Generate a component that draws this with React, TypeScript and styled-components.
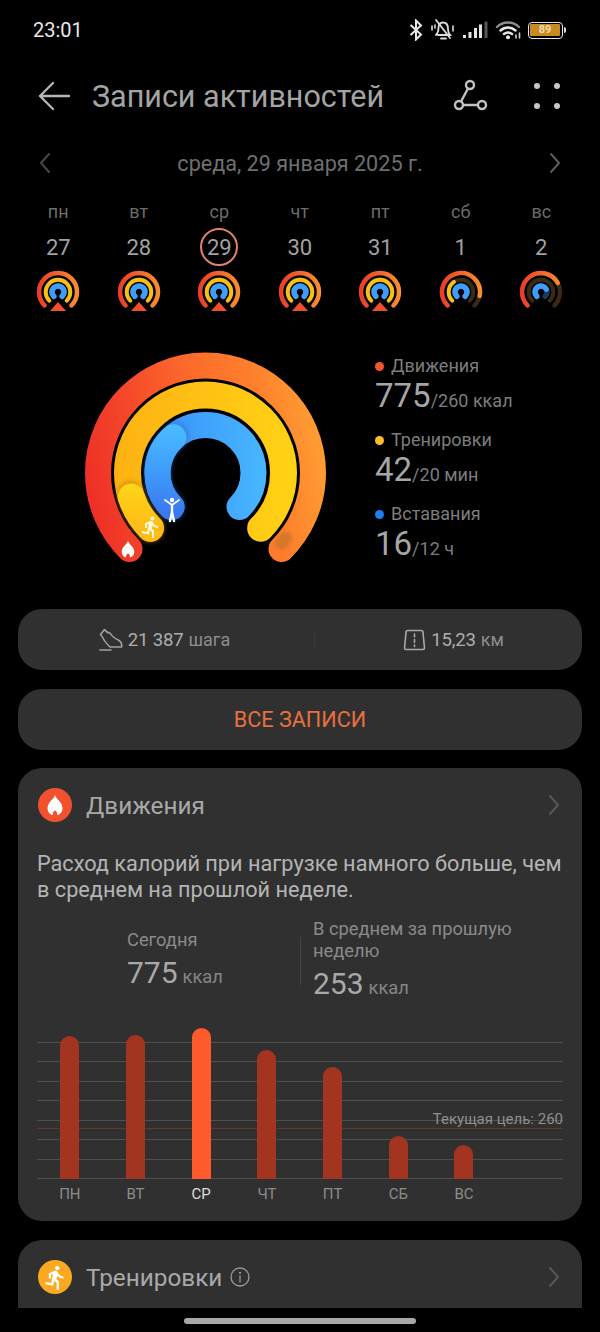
import React, { useId } from "react";
import styled, { createGlobalStyle } from "styled-components";
import { MdDirectionsRun } from "react-icons/md";

const Global = createGlobalStyle`
  html, body { margin: 0; padding: 0; background: #000; }
  body { width: 600px; height: 1332px; overflow: hidden; font-family: Roboto, "Noto Sans", sans-serif; }
  * { box-sizing: border-box; }
`;

const Page = styled.div`
  width: 600px;
  height: 1332px;
  background: #000;
  overflow: hidden;
  display: flex;
  flex-direction: column;
`;

const StatusBar = styled.div`
  height: 60px;
  display: flex;
  align-items: center;
  justify-content: space-between;
  padding: 0 34px 0 33px;
`;
const Clock = styled.span`
  font-size: 20px;
  font-weight: 400;
  color: #e8e8e8;
`;
const StatusIcons = styled.div`
  display: flex;
  align-items: center;
  gap: 7px;
`;
const BatteryBody = styled.div`
  width: 35px;
  height: 17px;
  border: 1.5px solid #e6e6e6;
  border-radius: 4px;
  padding: 1.5px;
  display: flex;
`;
const BatteryFill = styled.div`
  flex: 1;
  background: #c98a22;
  border-radius: 1px;
  color: #eedcb4;
  font-size: 11px;
  font-weight: 700;
  line-height: 11px;
  text-align: center;
`;
const BatteryTip = styled.div`
  width: 2.5px;
  height: 6px;
  background: #ddd;
  border-radius: 0 2px 2px 0;
  margin-left: -6px;
`;

const Header = styled.div`
  height: 72px;
  display: flex;
  align-items: center;
  padding-left: 38px;
`;
const Title = styled.h1`
  margin: 0 0 0 22px;
  font-size: 30.5px;
  font-weight: 400;
  color: #a4a4a4;
  flex: 1;
  white-space: nowrap;
`;
const HeaderActions = styled.div`
  display: flex;
  align-items: center;
  gap: 45px;
  padding-right: 40px;
`;

const DateRow = styled.div`
  margin-top: 7px;
  height: 48px;
  display: flex;
  align-items: center;
  justify-content: space-between;
  padding: 0 38px;
`;
const DateText = styled.span`
  font-size: 21.6px;
  color: #6f6f6f;
`;

const Week = styled.div`
  margin-top: 13px;
  padding: 0 18px;
  display: grid;
  grid-template-columns: repeat(7, 80.5px);
`;
const DayColumn = styled.div`
  display: flex;
  flex-direction: column;
  align-items: center;
`;
const DayName = styled.span`
  height: 24px;
  line-height: 24px;
  font-size: 18px;
  color: #6c6c6c;
`;
const DayNumber = styled.span<{ $selected?: boolean }>`
  margin-top: 4px;
  width: 38px;
  height: 38px;
  line-height: ${(p) => (p.$selected ? "36px" : "40px")};
  text-align: center;
  font-size: 22px;
  color: #a2a2a2;
  border-radius: 50%;
  border: ${(p) => (p.$selected ? "2px solid #e0836a" : "none")};
`;
const MiniSvg = styled.svg`
  display: block;
  margin-top: 3px;
`;

const Summary = styled.div`
  margin-top: 25px;
  height: 269px;
  display: flex;
  padding-left: 70px;
`;
const BigSvg = styled.svg`
  display: block;
  flex: none;
`;
const Legend = styled.div`
  margin: 14px 0 0 35px;
  display: flex;
  flex-direction: column;
`;
const LegendItem = styled.div`
  height: 74px;
`;
const LegendLabel = styled.div`
  height: 24px;
  line-height: 24px;
  font-size: 18px;
  color: #7d7d7d;
  display: flex;
  align-items: center;
  gap: 7px;
`;
const Dot = styled.span<{ $color: string }>`
  width: 9px;
  height: 9px;
  border-radius: 50%;
  background: ${(p) => p.$color};
`;
const LegendValue = styled.div`
  height: 36px;
  line-height: 36px;
  font-size: 33px;
  color: #a6a6a6;
  white-space: nowrap;
`;
const LegendGoal = styled.span`
  font-size: 18px;
  color: #7d7d7d;
`;

const Panel = styled.div`
  margin: 0 18px;
  background: #303030;
  border-radius: 24px;
`;
const StatsPanel = styled(Panel)`
  height: 61px;
  display: grid;
  grid-template-columns: 296px 1px 1fr;
  align-items: center;
`;
const Stat = styled.div<{ $shift?: number; $pull?: number }>`
  display: flex;
  align-items: center;
  justify-content: center;
  gap: 5px;
  font-size: 18.6px;
  color: #adadad;
  padding-left: ${(p) => p.$shift || 0}px;
  padding-right: ${(p) => p.$pull || 0}px;
`;
const StatValue = styled.span`
  letter-spacing: -0.2px;
`;
const StatUnit = styled.span`
  color: #8d8d8d;
  font-size: 18px;
`;
const StatDivider = styled.div`
  height: 18px;
  background: #3a3a3a;
`;
const AllButton = styled(Panel)`
  margin-top: 19px;
  height: 61px;
  line-height: 61px;
  text-align: center;
  font-size: 21.6px;
  color: #e8703f;
`;
const ActivityCard = styled(Panel)`
  margin-top: 18px;
  padding: 0 19px 17px;
`;
const CardHeader = styled.div`
  height: 74px;
  display: flex;
  align-items: center;
  gap: 14px;
  padding: 0 2px 0 1px;
`;
const CardIcon = styled.div<{ $color: string }>`
  width: 34px;
  height: 34px;
  border-radius: 50%;
  flex: none;
  background: ${(p) => p.$color};
  display: flex;
  align-items: center;
  justify-content: center;
  color: #fff;
`;
const CardTitle = styled.span`
  font-size: 24.3px;
  color: #a9a9a9;
`;
const TitleGroup = styled.div`
  flex: 1;
  display: flex;
  align-items: center;
  gap: 8px;
`;
const Body = styled.p`
  margin: 9px 0 0;
  font-size: 21.7px;
  line-height: 26px;
  color: #b4b4b4;
  white-space: nowrap;
`;
const Compare = styled.div`
  margin-top: 15px;
  padding-left: 90px;
  display: flex;
`;
const CompareToday = styled.div`
  width: 173px;
  padding-top: 11px;
`;
const CompareWeek = styled.div`
  position: relative;
  padding-left: 13px;
  &::before {
    content: "";
    position: absolute;
    left: 0;
    top: 19px;
    width: 1px;
    height: 48px;
    background: #454545;
  }
`;
const CompareLabel = styled.div`
  font-size: 18.3px;
  line-height: 22px;
  color: #8a8a8a;
`;
const CompareValue = styled.div`
  margin-top: 2px;
  line-height: 40px;
  font-size: 30px;
  color: #a9a9a9;
`;
const CompareUnit = styled.span`
  margin-left: 5px;
  font-size: 18.3px;
  color: #868686;
`;

const Chart = styled.div`
  position: relative;
  margin-top: 20px;
  height: 151px;
`;
const GridLines = styled.div`
  position: absolute;
  inset: 14px 0 0 0;
  display: flex;
  flex-direction: column;
  justify-content: space-between;
`;
const GridLine = styled.div`
  height: 1px;
  background: #4f4f4f;
`;
const GoalLine = styled.div`
  position: absolute;
  left: 0;
  right: 0;
  top: 100px;
  height: 1px;
  background: #63392e;
`;
const GoalLabel = styled.span`
  position: absolute;
  right: 0;
  top: 82px;
  font-size: 15px;
  line-height: 18px;
  color: #8f8f8f;
`;
const Columns = styled.div`
  display: grid;
  grid-template-columns: repeat(7, 65.7px);
`;
const BarSlot = styled(Columns)`
  position: relative;
  height: 151px;
  align-items: end;
  justify-items: center;
`;
const Bar = styled.div<{ $h: number; $active?: boolean }>`
  width: 19px;
  height: ${(p) => p.$h}px;
  border-radius: 10px 10px 0 0;
  background: ${(p) => (p.$active ? "#ff5a2b" : "#a3341f")};
`;
const ChartLabel = styled.span<{ $active?: boolean }>`
  margin-top: 5px;
  text-align: center;
  font-size: 15px;
  line-height: 20px;
  color: ${(p) => (p.$active ? "#dedede" : "#8c8c8c")};
`;

const CutCard = styled(Panel)`
  margin-top: 19px;
  height: 68px;
  padding: 0 19px;
  border-radius: 24px 24px 0 0;
  overflow: hidden;
  flex: none;
`;
const HomeBar = styled.div`
  margin: 10px auto 0;
  width: 232px;
  height: 6px;
  border-radius: 3px;
  background: #a8a8a8;
  flex: none;
`;

const FLAME = "M12 2C13 6.2 19.5 9 19.5 15.2C19.5 19.8 16 22 14.2 22C14.6 20 13.6 18 12 17.4C10.4 18 9.4 20 9.8 22C8 22 4.5 19.8 4.5 15.2C4.5 9 11 6.2 12 2Z";

const Flame = ({ x, y, s, fill = "#fff" }: { x: number; y: number; s: number; fill?: string }) => (
  <svg x={x} y={y} width={s} height={s} viewBox="0 0 24 24">
    <path d={FLAME} fill={fill} />
  </svg>
);

function pt(cx: number, cy: number, r: number, a: number) {
  const t = ((a - 90) * Math.PI) / 180;
  return [cx + r * Math.cos(t), cy + r * Math.sin(t)];
}
function arc(cx: number, cy: number, r: number, a0: number, a1: number) {
  const [x0, y0] = pt(cx, cy, r, a0);
  const [x1, y1] = pt(cx, cy, r, a1);
  const large = a1 - a0 > 180 ? 1 : 0;
  return `M${x0.toFixed(2)} ${y0.toFixed(2)}A${r} ${r} 0 ${large} 1 ${x1.toFixed(2)} ${y1.toFixed(2)}`;
}

type MiniProps = { move: number; train: number; stand: number; peak?: boolean };

const MiniRing = ({ move, train, stand, peak = true }: MiniProps) => {
  const id = useId();
  const c = 23;
  return (
    <MiniSvg width={46} height={46} viewBox="0 0 46 46">
      <defs>
        <linearGradient id={id} x1="2" y1="0" x2="44" y2="0" gradientUnits="userSpaceOnUse">
          <stop offset="0" stopColor="#ea3a28" />
          <stop offset="0.55" stopColor="#f7682c" />
          <stop offset="1" stopColor="#fb9030" />
        </linearGradient>
      </defs>
      <g fill="none" strokeLinecap="round">
        <path d={arc(c, c, 19, -135, 135)} stroke="#3a2a14" strokeWidth={4.4} />
        <path d={arc(c, c, 12.3, -135, 135)} stroke="#3a2c14" strokeWidth={3.9} />
        <path d={arc(c, c, 6, -135, 135)} stroke="#1c3a5c" strokeWidth={5.5} />
        <path d={arc(c, c, 19, -135, move)} stroke={`url(#${id})`} strokeWidth={4.4} />
        {train > -135 && <path d={arc(c, c, 12.3, -135, train)} stroke="#fdbd17" strokeWidth={3.9} />}
        <path d={arc(c, c, 6, -135, stand)} stroke="#3f9dfb" strokeWidth={5.5} />
      </g>
      {peak && <polygon points="23,33 15,42 31,42" fill="#f0502a" />}
    </MiniSvg>
  );
};

const BigRing = () => {
  const cx = 135.5;
  const cy = 133;
  const ro = 107.5;
  const rm = 78;
  const ri = 48;
  return (
    <BigSvg width={270} height={235} viewBox="0 0 270 235">
      <defs>
        <linearGradient id="bo" x1="15" y1="200" x2="256" y2="150" gradientUnits="userSpaceOnUse">
          <stop offset="0" stopColor="#ec2a26" />
          <stop offset="0.3" stopColor="#f64a2a" />
          <stop offset="0.55" stopColor="#fc6a2b" />
          <stop offset="0.8" stopColor="#fe7f2c" />
          <stop offset="1" stopColor="#ff9a32" />
        </linearGradient>
        <linearGradient id="bm" x1="45" y1="0" x2="227" y2="0" gradientUnits="userSpaceOnUse">
          <stop offset="0" stopColor="#fdb212" />
          <stop offset="0.5" stopColor="#ffc113" />
          <stop offset="1" stopColor="#ffd315" />
        </linearGradient>
        <linearGradient id="bmo" x1="0" y1="190" x2="0" y2="145" gradientUnits="userSpaceOnUse">
          <stop offset="0" stopColor="#fdbc17" />
          <stop offset="1" stopColor="#ffd418" />
        </linearGradient>
        <linearGradient id="bi" x1="75" y1="0" x2="197" y2="0" gradientUnits="userSpaceOnUse">
          <stop offset="0" stopColor="#3b8ef8" />
          <stop offset="0.5" stopColor="#40a2fd" />
          <stop offset="1" stopColor="#47b7ff" />
        </linearGradient>
        <linearGradient id="bio" x1="0" y1="178" x2="0" y2="90" gradientUnits="userSpaceOnUse">
          <stop offset="0" stopColor="#3a74ee" />
          <stop offset="0.55" stopColor="#3f9dfb" />
          <stop offset="1" stopColor="#4ab9ff" />
        </linearGradient>
        <filter id="soft" filterUnits="userSpaceOnUse" x="0" y="0" width="270" height="235">
          <feGaussianBlur stdDeviation="2.5" />
        </filter>
        <filter id="softer" filterUnits="userSpaceOnUse" x="0" y="0" width="270" height="235">
          <feGaussianBlur stdDeviation="1.5" />
        </filter>
      </defs>
      <g fill="none" strokeLinecap="round">
        <path d={arc(cx, cy, ro, -135, 135)} stroke="url(#bo)" strokeWidth={26} />
        <path d={arc(cx, cy, ro - 4, 129, 133)} stroke="#c9742a" strokeWidth={13} filter="url(#softer)" opacity={0.7} />

        <path d={arc(cx, cy, rm, -135, 135)} stroke="url(#bm)" strokeWidth={27} />
        <path d={arc(cx, cy, rm, -135, -106)} stroke="#c98608" strokeWidth={27} filter="url(#soft)" opacity={0.7} />
        <path d={arc(cx, cy, rm, -135, -108)} stroke="url(#bmo)" strokeWidth={27} />

        <path d={arc(cx, cy, ri, -135, 135)} stroke="url(#bi)" strokeWidth={26} />
        <path d={arc(cx, cy, ri, -135, -38)} stroke="#2f6fd0" strokeWidth={26} filter="url(#soft)" opacity={0.55} />
        <path d={arc(cx, cy, ri, -135, -42)} stroke="url(#bio)" strokeWidth={26} />
      </g>
      <Flame x={48} y={199} s={20} />
      <svg x={69} y={175} width={24} height={24} viewBox="0 0 24 24">
        <MdDirectionsRun x={0} y={0} size={24} color="#fff8dc" />
      </svg>
      <g fill="none" stroke="#fff" strokeWidth={1.8} strokeLinecap="round" strokeLinejoin="round">
        <path d="M95 160L102 165L109 160" />
        <path d="M102 165L102 172M102 172L100 181M102 172L104 181" strokeWidth={2.4} />
      </g>
      <circle cx={102} cy={160} r={2.2} fill="#fff" />
    </BigSvg>
  );
};

const days: { n: string; d: string; ring: MiniProps; sel?: boolean }[] = [
  { n: "пн", d: "27", ring: { move: 135, train: 135, stand: 135 } },
  { n: "вт", d: "28", ring: { move: 135, train: 135, stand: 135 } },
  { n: "ср", d: "29", ring: { move: 135, train: 135, stand: 135 }, sel: true },
  { n: "чт", d: "30", ring: { move: 135, train: 135, stand: 135 } },
  { n: "пт", d: "31", ring: { move: 135, train: 135, stand: 135 } },
  { n: "сб", d: "1", ring: { move: 102, train: -35, stand: 135, peak: false } },
  { n: "вс", d: "2", ring: { move: 62, train: -135, stand: 60, peak: false } },
];

const bars = [
  { l: "ПН", h: 143 },
  { l: "ВТ", h: 144 },
  { l: "СР", h: 151, a: true },
  { l: "ЧТ", h: 129 },
  { l: "ПТ", h: 112 },
  { l: "СБ", h: 43 },
  { l: "ВС", h: 34 },
];

const Chevron = ({ left, color }: { left?: boolean; color: string }) => (
  <svg width={14} height={24} viewBox="0 0 14 24" fill="none" stroke={color} strokeWidth={2} strokeLinecap="round" strokeLinejoin="round">
    <path d={left ? "M11 3L3 12L11 21" : "M3 3L11 12L3 21"} />
  </svg>
);

export default function App() {
  return (
    <Page>
      <Global />
      <StatusBar>
        <Clock>23:01</Clock>
        <StatusIcons>
          <svg width={14} height={22} viewBox="0 0 14 22" fill="none" stroke="#e8e8e8" strokeWidth={2} strokeLinejoin="miter">
            <path d="M1.5 6L12 15.5L7 20.5V1.5L12 6.5L1.5 16" />
          </svg>
          <svg width={26} height={24} viewBox="0 0 26 24" fill="none" stroke="#dcdcdc" strokeWidth={1.8} strokeLinecap="round">
            <path d="M8 17H20C18 15 18 13 18 11C18 7 16 4.5 13 4.5C10 4.5 8.5 7 8.5 10C8.5 13 8 15 6 17" />
            <path d="M11 20.5H16" />
            <path d="M6 2L20 20" />
            <path d="M2 8V12M5 7V10M23 8V13" strokeWidth={1.6} />
          </svg>
          <svg width={25} height={18} viewBox="0 0 25 18" fill="#e4e4e4">
            <rect x="0" y="14" width="3" height="3" />
            <rect x="5.5" y="11" width="3" height="6" />
            <rect x="11" y="7" width="3" height="10" />
            <rect x="16" y="3.5" width="3" height="13.5" />
            <rect x="21.5" y="0.5" width="3" height="16.5" fill="#555" />
          </svg>
          <svg width={26} height={20} viewBox="0 0 26 20" fill="none" strokeLinecap="round">
            <path d="M2 7C8 1 18 1 24 7" stroke="#8e8e8e" strokeWidth={2.4} />
            <path d="M5.5 10.5C10 6.5 16 6.5 20.5 10.5" stroke="#e8e8e8" strokeWidth={2.4} />
            <path d="M9 14C11.5 12 14.5 12 17 14" stroke="#e8e8e8" strokeWidth={2.4} />
            <circle cx="13" cy="17.2" r="2" fill="#e8e8e8" />
            <path d="M21 18V15M24.5 18V13" stroke="#ccc" strokeWidth={1.6} />
          </svg>
          <BatteryBody>
            <BatteryFill>89</BatteryFill>
          </BatteryBody>
          <BatteryTip />
        </StatusIcons>
      </StatusBar>

      <Header>
        <svg width={32} height={30} viewBox="0 0 32 30" fill="none" stroke="#b8b8b8" strokeWidth={2.3} strokeLinecap="round" strokeLinejoin="round">
          <path d="M31 15H2M15 2L2 15L15 28" />
        </svg>
        <Title>Записи активностей</Title>
        <HeaderActions>
          <svg width={36} height={34} viewBox="0 0 36 34" fill="none" stroke="#c2c2c2" strokeWidth={2.4}>
            <circle cx="17" cy="6" r="4" />
            <circle cx="6" cy="26" r="4" />
            <circle cx="29" cy="26" r="4" />
            <path d="M15 9.5L8 22.5M10 26H25" />
          </svg>
          <svg width={26} height={26} viewBox="0 0 26 26" fill="#c8c8c8">
            <circle cx="3" cy="3" r="3" />
            <circle cx="23" cy="3" r="3" />
            <circle cx="3" cy="23" r="3" />
            <circle cx="23" cy="23" r="3" />
          </svg>
        </HeaderActions>
      </Header>

      <DateRow>
        <Chevron left color="#484848" />
        <DateText>среда, 29 января 2025 г.</DateText>
        <Chevron color="#5c5c5c" />
      </DateRow>

      <Week>
        {days.map((d) => (
          <DayColumn key={d.n}>
            <DayName>{d.n}</DayName>
            <DayNumber $selected={d.sel}>{d.d}</DayNumber>
            <MiniRing {...d.ring} />
          </DayColumn>
        ))}
      </Week>

      <Summary>
        <BigRing />
        <Legend>
          <LegendItem>
            <LegendLabel><Dot $color="#f4552f" />Движения</LegendLabel>
            <LegendValue>775<LegendGoal>/260 ккал</LegendGoal></LegendValue>
          </LegendItem>
          <LegendItem>
            <LegendLabel><Dot $color="#fdbb2d" />Тренировки</LegendLabel>
            <LegendValue>42<LegendGoal>/20 мин</LegendGoal></LegendValue>
          </LegendItem>
          <LegendItem>
            <LegendLabel><Dot $color="#1c7ef0" />Вставания</LegendLabel>
            <LegendValue>16<LegendGoal>/12 ч</LegendGoal></LegendValue>
          </LegendItem>
        </Legend>
      </Summary>

      <StatsPanel>
        <Stat $pull={3}>
          <svg width={24} height={24} viewBox="0 0 24 24" fill="none" stroke="#a0a0a0" strokeWidth={1.6} strokeLinecap="round" strokeLinejoin="round">
            <path d="M1.5 6.5L5.5 1.5C7 4 9.5 5 11.5 5.5C13 8.5 16 10.5 20 12.5C22 13.5 23 16 22.5 19H11C8 16 6 14 4.5 11C3.5 9 2.5 8 1.5 6.5Z" />
            <path d="M1 22H12" />
          </svg>
          <StatValue>21 387</StatValue>
          <StatUnit>шага</StatUnit>
        </Stat>
        <StatDivider />
        <Stat $shift={10}>
          <svg width={23} height={24} viewBox="0 0 23 24" fill="none" stroke="#a8a8a8" strokeWidth={1.6} strokeLinecap="round" strokeLinejoin="round">
            <path d="M5 2.5H18C19.5 2.5 20 3.5 20 4.5L21.5 20C21.5 21 21 21.5 20 21.5H3C2 21.5 1.5 21 1.5 20L3 4.5C3 3.5 3.5 2.5 5 2.5Z" />
            <path d="M11.5 6V9M11.5 11.5V14.5M11.5 17V18.5" />
          </svg>
          <StatValue>15,23</StatValue>
          <StatUnit>км</StatUnit>
        </Stat>
      </StatsPanel>

      <AllButton>ВСЕ ЗАПИСИ</AllButton>

      <ActivityCard>
        <CardHeader>
          <CardIcon $color="#f1512c">
            <svg width={24} height={24} viewBox="0 0 24 24"><path d={FLAME} fill="#fff" /></svg>
          </CardIcon>
          <TitleGroup><CardTitle>Движения</CardTitle></TitleGroup>
          <Chevron color="#575757" />
        </CardHeader>
        <Body>
          Расход калорий при нагрузке намного больше, чем
          <br />
          в среднем на прошлой неделе.
        </Body>
        <Compare>
          <CompareToday>
            <CompareLabel>Сегодня</CompareLabel>
            <CompareValue>775<CompareUnit>ккал</CompareUnit></CompareValue>
          </CompareToday>
          <CompareWeek>
            <CompareLabel>
              В среднем за прошлую
              <br />
              неделю
            </CompareLabel>
            <CompareValue>253<CompareUnit>ккал</CompareUnit></CompareValue>
          </CompareWeek>
        </Compare>
        <Chart>
          <GridLines>
            {Array.from({ length: 8 }, (_, i) => <GridLine key={i} />)}
          </GridLines>
          <GoalLine />
          <GoalLabel>Текущая цель: 260</GoalLabel>
          <BarSlot>
            {bars.map((b) => <Bar key={b.l} $h={b.h} $active={b.a} />)}
          </BarSlot>
        </Chart>
        <Columns>
          {bars.map((b) => <ChartLabel key={b.l} $active={b.a}>{b.l}</ChartLabel>)}
        </Columns>
      </ActivityCard>

      <CutCard>
        <CardHeader>
          <CardIcon $color="#fba91e">
            <MdDirectionsRun size={27} color="#fff" />
          </CardIcon>
          <TitleGroup>
            <CardTitle>Тренировки</CardTitle>
            <svg width={20} height={20} viewBox="0 0 20 20" fill="none" stroke="#9a9a9a" strokeWidth={1.3} strokeLinecap="round">
              <circle cx="10" cy="10" r="9" />
              <path d="M10 9V15" />
              <circle cx="10" cy="5.8" r="0.5" fill="#9a9a9a" />
            </svg>
          </TitleGroup>
          <Chevron color="#575757" />
        </CardHeader>
      </CutCard>
      <HomeBar />
    </Page>
  );
}
